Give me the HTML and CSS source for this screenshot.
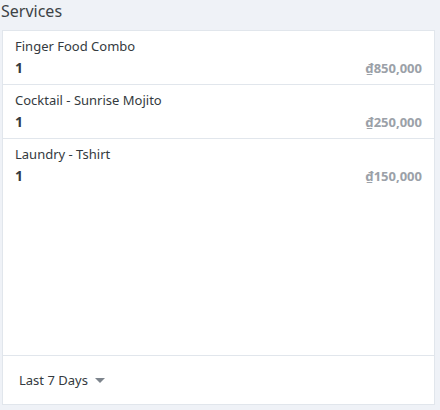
FILE: index.html
```html
<!DOCTYPE html>
<html lang="en">
<head>
    <meta charset="UTF-8">
    <meta name="viewport" content="width=device-width, initial-scale=1.0">
    <title>Services</title>
    <link rel="stylesheet" href="styles.css">
</head>
<body>
    <div class="panel">
        <h2 class="panel-title">Services</h2>

        <div class="card">
            <div class="service-list">
                <div class="service-item">
                    <div class="service-name">Finger Food Combo</div>
                    <div class="service-row">
                        <span class="service-qty">1</span>
                        <span class="service-price">₫850,000</span>
                    </div>
                </div>
                <div class="service-item">
                    <div class="service-name">Cocktail - Sunrise Mojito</div>
                    <div class="service-row">
                        <span class="service-qty">1</span>
                        <span class="service-price">₫250,000</span>
                    </div>
                </div>
                <div class="service-item">
                    <div class="service-name">Laundry - Tshirt</div>
                    <div class="service-row">
                        <span class="service-qty">1</span>
                        <span class="service-price">₫150,000</span>
                    </div>
                </div>
            </div>

            <div class="card-footer">
                <button type="button" class="range-button">
                    Last 7 Days
                    <span class="caret"></span>
                </button>
            </div>
        </div>
    </div>
</body>
</html>
```

FILE: styles.css
```css
* {
    margin: 0;
    padding: 0;
    box-sizing: border-box;
    font-family: 'Segoe UI', 'Noto Sans', sans-serif;
}

body {
    background-color: #eff2f7;
    color: #343a40;
    width: 440px;
    height: 410px;
    overflow: hidden;
}

.panel {
    padding: 0 5px 5px 2px;
}

.panel-title {
    font-size: 16px;
    font-weight: normal;
    color: #3d4246;
    height: 30px;
    line-height: 22px;
    margin-left: -1px;
}

.card {
    background: white;
    border: 1px solid #e1e6ec;
    height: 375px;
    display: flex;
    flex-direction: column;
}

.service-list {
    flex: 1;
}

.service-item {
    height: 54px;
    padding: 6px 12px 0 12px;
    border-bottom: 1px solid #e1e6ec;
}

.service-item:last-child {
    border-bottom: none;
}

.service-name {
    font-size: 13px;
    color: #343a40;
    line-height: 18px;
}

.service-row {
    display: flex;
    justify-content: space-between;
    align-items: baseline;
    line-height: 24px;
    margin-top: 1px;
}

.service-qty {
    font-size: 14px;
    font-weight: bold;
    color: #343a40;
}

.service-price {
    font-size: 13px;
    font-weight: bold;
    color: #9ba1a8;
}

.card-footer {
    height: 49px;
    border-top: 1px solid #e1e6ec;
    display: flex;
    align-items: center;
    padding-left: 16px;
}

.range-button {
    background: none;
    border: none;
    font-size: 13px;
    color: #343a40;
    display: flex;
    align-items: center;
    gap: 7px;
    cursor: pointer;
}

.caret {
    width: 0;
    height: 0;
    border-left: 5px solid transparent;
    border-right: 5px solid transparent;
    border-top: 5px solid #7d848c;
}
```
